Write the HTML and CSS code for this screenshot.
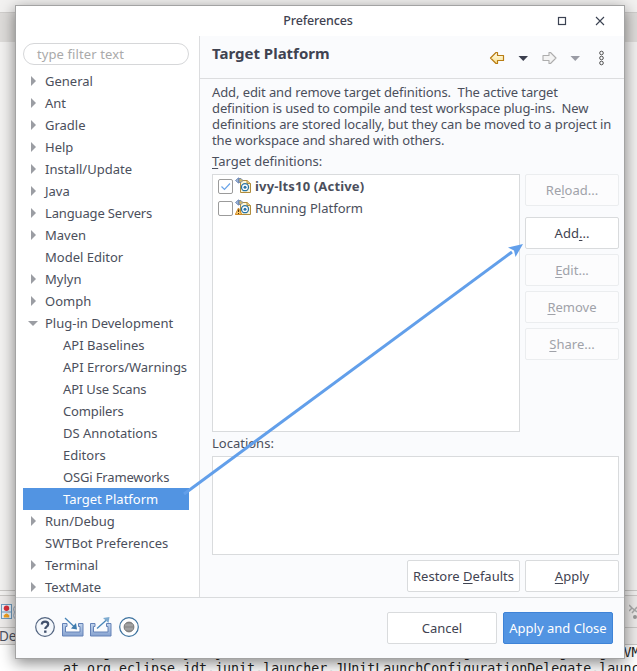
FILE: index.html
```html
<!DOCTYPE html>
<html lang="en">
<head>
<meta charset="utf-8">
<title>Preferences</title>
<link rel="stylesheet" href="styles.css">
</head>
<body>
<div class="desktop">
  <div class="desk-menu"></div>
  <div class="desk-toolbar"></div>
  <div class="desk-body"></div>
  <div class="desk-tabs">
    <svg class="junit" width="16" height="18" viewBox="0 0 16 18"><rect x="1.500" y="1.500" width="10" height="14" fill="#eaf1f8" stroke="#6d9bc0"/><path d="M1.500 9h10" stroke="#6d9bc0"/><circle cx="6.500" cy="5.200" r="2.700" fill="#d8303a"/><path d="M3.800 14.500v-2q2.700-4 5.400 0v2z" fill="#f0a020"/><path d="M16 2.500q-4 2.500-1.500 6.500q-2 4 0 6.500" fill="none" stroke="#9fb0c8"/></svg>
    <svg class="tool" width="8" height="18" viewBox="0 0 8 18"><path d="M0 2l3 3-3 3M3 5l5 4M8 4L3 10" fill="none" stroke="#aaa" stroke-width="1.500"/><circle cx="6" cy="14" r="2" fill="#999"/></svg>
  </div>
  <div class="desk-status">Devel</div>
  <div class="console"><div>at org.eclipse.jdt.junit.launcher.JUnitLaunchConfigurationDelegate.getVM</div><div>at org.eclipse.jdt.junit.launcher.JUnitLaunchConfigurationDelegate.launc</div></div>
</div>

<section class="dialog">
  <header class="titlebar">
    <h1>Preferences</h1>
    <svg class="win-ctl" width="48" height="10" viewBox="0 0 48 10"><rect x="1.500" y="1.500" width="7" height="7" fill="none" stroke="#3b4252" stroke-width="1.200"/><path d="M39 1l8 8M47 1l-8 8" stroke="#3b4252" stroke-width="1.100"/></svg>
  </header>
  <div class="main">
    <nav class="side">
      <div class="filter">type filter text</div>
      <ul class="tree">
        <li class="node">General</li>
        <li class="node">Ant</li>
        <li class="node">Gradle</li>
        <li class="node">Help</li>
        <li class="node">Install/Update</li>
        <li class="node">Java</li>
        <li class="node snug">Language Servers</li>
        <li class="node">Maven</li>
        <li>Model Editor</li>
        <li class="node">Mylyn</li>
        <li class="node">Oomph</li>
        <li class="node open">Plug-in Development</li>
        <li class="child">API Baselines</li>
        <li class="child">API Errors/Warnings</li>
        <li class="child snug">API Use Scans</li>
        <li class="child snug">Compilers</li>
        <li class="child">DS Annotations</li>
        <li class="child">Editors</li>
        <li class="child snug">OSGi Frameworks</li>
        <li class="child selected">Target Platform</li>
        <li class="node">Run/Debug</li>
        <li>SWTBot Preferences</li>
        <li class="node">Terminal</li>
        <li class="node">TextMate</li>
      </ul>
    </nav>
    <div class="page">
      <div class="page-head">
        <h2>Target Platform</h2>
        <svg width="118" height="18" viewBox="0 0 118 18">
          <defs><linearGradient id="gold" x1="0" y1="0" x2="0" y2="1"><stop offset="0" stop-color="#fffef0"/><stop offset="1" stop-color="#fbe08a"/></linearGradient></defs>
          <path d="M1.500 9L7 3.500h1.500V6.500H14.500v5H8.500v3H7z" fill="url(#gold)" stroke="#b87d14" stroke-linejoin="round" stroke-width="1.200"/>
          <path d="M29.500 7h9.500l-4.750 5z" fill="#3b3f4f"/>
          <path d="M67 9L61.500 3.500h-1.500V6.500H54v5h6v3H61.500z" fill="#f3f3f3" stroke="#adadad" stroke-linejoin="round" stroke-width="1.100"/>
          <path d="M81.500 7h9.500l-4.750 5z" fill="#9a9ca5"/>
          <g fill="none" stroke="#505050"><circle cx="112.500" cy="4" r="1.800"/><circle cx="112.500" cy="9" r="1.800"/><circle cx="112.500" cy="14" r="1.800"/></g>
        </svg>
      </div>
      <div class="content">
        <p class="intro"><span class="l1">Add, edit and remove target definitions.&nbsp; The active target</span><span class="l2">definition is used to compile and test workspace plug-ins.&nbsp; New</span><span class="l3">definitions are stored locally, but they can be moved to a project in</span><span class="l4">the workspace and shared with others.</span></p>
        <div class="label"><u>T</u>arget definitions:</div>
        <div class="defs">
          <div class="list">
            <div class="item active">
              <span class="check"><svg width="13" height="13" viewBox="0 0 13 13"><path d="M2.500 6.500L5.500 9.500L11 3.500" fill="none" stroke="#6aa4e8" stroke-width="1.200"/></svg></span>
              <svg class="target" width="17" height="17" viewBox="0 0 17 17"><use href="#target"/></svg>
              <span>ivy-lts10 (Active)</span>
            </div>
            <div class="item">
              <span class="check"></span>
              <svg class="target" width="17" height="17" viewBox="0 0 17 17"><use href="#target"/><path d="M3.500 9L6.800 15.500H.3z" fill="#f9c667" stroke="#d08a25" stroke-linejoin="round"/><path d="M3.500 10.500v2.500M3.500 14v1" stroke="#4b3210"/></svg>
              <span>Running Platform</span>
            </div>
          </div>
          <div class="actions">
            <button class="off first">Re<u>l</u>oad...</button>
            <button>Add<u>.</u>..</button>
            <button class="off"><u>E</u>dit...</button>
            <button class="off"><u>R</u>emove</button>
            <button class="off"><u>S</u>hare...</button>
          </div>
        </div>
        <div class="label loc">Locations:</div>
        <div class="locations"></div>
        <div class="apply-row"><button class="restore">Restore <u>D</u>efaults</button><button class="apply"><u>A</u>pply</button></div>
      </div>
    </div>
  </div>
  <footer class="footer">
    <svg class="tools" width="106" height="22" viewBox="0 0 106 22">
      <defs><linearGradient id="tray" x1="0" y1="0" x2="0" y2="1"><stop offset="0" stop-color="#c3d6ee"/><stop offset="1" stop-color="#86a2d0"/></linearGradient></defs>
      <circle cx="11" cy="11" r="9.300" fill="#f4f7fb" stroke="#536581" stroke-width="1.200"/>
      <path d="M7.800 8.600Q7.800 5.600 11.100 5.600Q14.200 5.600 14.200 8.200Q14.200 9.700 12.500 10.800Q11.300 11.600 11.300 13" fill="none" stroke="#41506c" stroke-width="2.200"/><rect x="10.100" y="14.500" width="2.400" height="2.300" fill="#41506c"/>
      <g id="box"><path d="M28.500 7.500H33v3h-1.500v5.500h14.500v-5.500h-1.500v-3H49v12.500h-20.500z" fill="url(#tray)" stroke="#6482b7"/></g>
      <use href="#box" x="28"/>
      <path d="M31 2l9 8.500" stroke="#4a86b8" stroke-width="1.300"/><path d="M43 13.500l-6-1 5-5.500z" fill="#3f7cae"/>
      <path d="M63 12.500l10-9" stroke="#4a86b8" stroke-width="1.300"/><path d="M75.500 1l-1 6-5.500-5z" fill="#7eabd0"/>
      <circle cx="95" cy="11" r="9.300" fill="#fff" stroke="#3c729f" stroke-width="1.200"/><circle cx="95" cy="11" r="4.900" fill="#929292" stroke="#777"/><path d="M91 9h8M91 13h8" stroke="#b0b0b0"/>
    </svg>
    <button class="cancel">Cancel</button>
    <button class="primary">Apply and Close</button>
  </footer>
</section>

<svg class="symbols" width="0" height="0"><defs><g id="target">
  <path d="M5.500 3.500H12L15.500 6.500V15.500H5.500z" fill="#fdf6d8" stroke="#b08c3c"/><path d="M12 3.500V6.500h3.500" fill="#e8cf86" stroke="#b08c3c"/>
  <path d="M.5 3.500L3.500.8V6.200z" fill="#9cb4d8" stroke="#6580b0" stroke-width=".8"/><path d="M4 1.500h2l2 2-2 2H4z" fill="#cbb66c" stroke="#6580b0" stroke-width=".8"/>
  <circle cx="10" cy="10.200" r="3.500" fill="#fff" stroke="#2874a6" stroke-width="1.300"/><circle cx="10" cy="10.200" r="1.500" fill="#2874a6"/>
</g></defs></svg>
<svg class="pointer" width="637" height="671" viewBox="0 0 637 671"><path d="M184 494L512 252" stroke="#629fea" stroke-width="3"/><path d="M523 244L515.500 257L514 250.500L508 247.500z" fill="#629fea"/></svg>
</body>
</html>
```

FILE: styles.css
```css
*, *::before { box-sizing: border-box; }
body { margin: 0; width: 637px; height: 671px; overflow: hidden; position: relative; background: #fff; color: #4b4f5c; font: 13px/16px "Noto Sans", "Open Sans", sans-serif; }
.desktop { display: flex; flex-direction: column; height: 671px; }
.desk-menu { height: 13px; background: #f2f1f0; border-bottom: 1px solid #cfcdcb; }
.desk-toolbar { height: 29px; background: #dddbd9; }
.desk-body { height: 549px; background: #f2f1f0; border-bottom: 1px solid #c9c7c5; }
.desk-tabs { height: 37px; background: #edebea; border-bottom: 1px solid #c9c7c5; display: flex; justify-content: space-between; align-items: center; box-shadow: inset 0 4px #f2f1f0, inset 0 5px #c9c7c5; padding-top: 5px; }
.desk-status { height: 17px; background: #edebea; border-bottom: 1px solid #c9c7c5; font-size: 13.500px; line-height: 16px; text-indent: -1px; }
.console { flex: 1; overflow: hidden; padding-left: 63px; color: #222; font: 13.300px/16px "DejaVu Sans Mono", monospace; white-space: nowrap; }
.dialog { position: absolute; left: 15px; top: 5px; width: 610px; height: 654px; border: 1px solid #a3a3a3; background: #fff; box-shadow: 0 4px 14px rgba(0,0,0,.48); display: flex; flex-direction: column; }
.titlebar { height: 30px; display: flex; justify-content: flex-end; align-items: center; padding-right: 19px; position: relative; }
.titlebar h1 { position: absolute; left: 0; right: 0; margin: 0; text-align: center; font-size: 12.500px; font-weight: 500; line-height: 16px; color: #3f4351; padding-right: 4px; letter-spacing: -.15px; }
.main { height: 562px; display: flex; border-bottom: 1px solid #d9dbdd; }
.side { width: 184px; padding: 7px 10px 0 7px; border-right: 1px solid #dcdddf; overflow: hidden; }
.filter { height: 22px; border: 1px solid #d6d7d9; border-radius: 11px; padding: 2px 0 0 13px; color: #aaa; letter-spacing: .1px; }
.tree { list-style: none; margin: 5px 0 0; padding: 0; }
.tree li { height: 22px; line-height: 22px; padding-left: 22px; white-space: nowrap; display: flex; align-items: center; }
.tree .node { padding-left: 8px; }
.tree .snug { letter-spacing: -.15px; }
.node::before { content: ""; width: 5px; margin-right: 9px; border: solid transparent; border-width: 5px 0 5px 5px; border-left-color: #9b9da3; }
.tree .open { padding-left: 5px; }
.open::before { width: 10px; margin-right: 7px; border-width: 5px 5px 0; border-color: #9b9da3 transparent; }
.tree .child { padding-left: 40px; }
.tree .selected { background: #5294e2; color: #fff; }
.page { flex: 1; background: #fafbfd; }
.page-head { height: 43px; border-bottom: 1px solid #dcdddf; display: flex; justify-content: space-between; padding: 0 17px 0 12px; }
.page-head h2 { margin: 7px 0 0; font-size: 15px; line-height: 20px; font-weight: 700; color: #3f4351; }
.page-head svg { margin-top: 13px; }
.content { padding: 5px 5px 0 12px; }
.intro { margin: 0; white-space: nowrap; display: flex; flex-direction: column; }
.l1 { letter-spacing: -.1px; }
.l2 { letter-spacing: -.12px; }
.l3 { letter-spacing: -.08px; }
.l4 { letter-spacing: -.13px; }
.label { height: 16px; margin: 5px 0; }
u { text-underline-offset: 2px; }
.defs { display: flex; gap: 5px; }
.list { width: 308px; height: 258px; border: 1px solid #d9dbdd; background: #fff; }
.item { height: 22px; display: flex; align-items: center; padding-left: 5px; }
.active { font-weight: 700; letter-spacing: .16px; }
.check { width: 15px; height: 15px; border: 1px solid #9b9b9b; border-radius: 2px; background: #fff; }
.check svg { display: block; }
.target { margin: 0 3px 1px 2px; }
.actions { width: 94px; display: flex; flex-direction: column; gap: 5px; }
button { height: 32px; padding: 0; border: 1px solid #d9dbdd; border-radius: 2px; background: #fff; color: #3f4351; font: inherit; white-space: nowrap; }
.off { color: #a0a2a9; background: #fcfcfd; border-color: #ebedef; }
.first { margin-bottom: 6px; }
.loc { margin: 3px 0 5px; }
.locations { height: 99px; width: 407px; border: 1px solid #d9dbdd; background: #fff; }
.apply-row { margin-top: 5px; display: flex; justify-content: flex-end; gap: 5px; }
.restore { width: 113px; }
.apply { width: 94px; }
.footer { flex: 1; background: #fafbfd; display: flex; padding: 14px 11px 0 18px; }
.tools { margin: 4px auto 0 0; }
.cancel { width: 110px; margin-right: 6px; }
.primary { width: 110px; color: #fff; background: #5294e2; border-color: #3e83d7; }
.symbols, .pointer { position: absolute; left: 0; top: 0; pointer-events: none; }
```
